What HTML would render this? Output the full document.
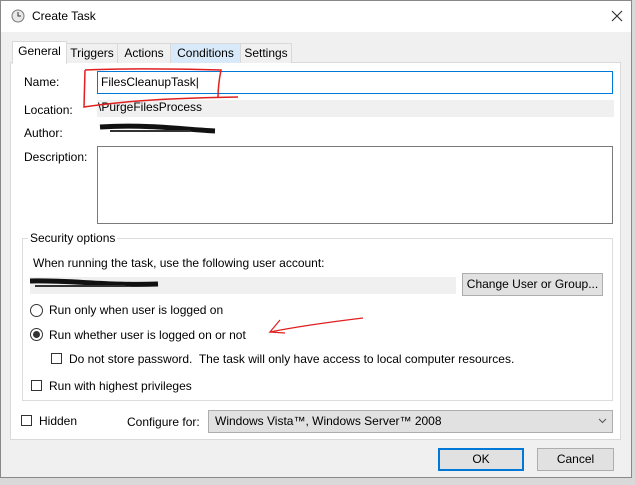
<!DOCTYPE html><html><head><style>
body{margin:0;width:635px;height:485px;background:#d9d9d9;position:relative;overflow:hidden;font-family:"Liberation Sans",sans-serif;font-size:12px;color:#000}
.a{position:absolute}
.win{left:0;top:0;width:632px;height:478px;background:#f0f0f0;border:1px solid #888;box-sizing:border-box}
.cb{width:11px;height:11px;border:1px solid #333;background:#fff;box-sizing:border-box}
.rb{width:13px;height:13px;border:1px solid #333;border-radius:50%;background:#fff;box-sizing:border-box}
.tab{top:43px;height:20px;border:1px solid #d9d9d9;border-bottom:none;background:#f0f0f0;box-sizing:border-box;line-height:19px;text-align:center}
.btn{background:#e1e1e1;border:1px solid #adadad;box-sizing:border-box;text-align:center}
</style></head><body>
<div class="a win"></div>
<div class="a" style="left:1px;top:1px;width:630px;height:31px;background:#fff"></div>
<svg class="a" style="left:11px;top:9px" width="14" height="14"><circle cx="7" cy="7" r="6" fill="#e8e8e8" stroke="#777"/><path d="M7 3V7H10" stroke="#333" fill="none"/></svg>
<div class="a" style="left:32px;top:9px;font-size:12px">Create Task</div>
<svg class="a" style="left:611px;top:10px" width="12" height="12"><path d="M1 1L11 11M11 1L1 11" stroke="#222" stroke-width="1"/></svg>
<div class="a" style="left:10px;top:62px;width:611px;height:378px;background:#fff;border:1px solid #d9d9d9;box-sizing:border-box"></div>
<div class="a tab" style="left:66px;width:52px">Triggers</div>
<div class="a tab" style="left:117px;width:54px">Actions</div>
<div class="a tab" style="left:170px;width:71px;background:#d8eaf9">Conditions</div>
<div class="a tab" style="left:240px;width:52px">Settings</div>
<div class="a tab" style="left:12px;top:41px;height:23px;width:55px;background:#fff;border-color:#d9d9d9">General</div>
<div class="a" style="left:24px;top:75px">Name:</div>
<div class="a" style="left:97px;top:71px;width:516px;height:23px;border:1px solid #0078d7;background:#fff;box-sizing:border-box;padding:3px 3px">FilesCleanupTask|</div>
<div class="a" style="left:24px;top:103px">Location:</div>
<div class="a" style="left:97px;top:100px;width:516px;height:17px;background:#f0f0f0;padding-left:1px">\PurgeFilesProcess</div>
<div class="a" style="left:24px;top:126px">Author:</div>
<div class="a" style="left:24px;top:150px">Description:</div>
<div class="a" style="left:97px;top:146px;width:516px;height:78px;border:1px solid #7a7a7a;background:#fff;box-sizing:border-box"></div>
<div class="a" style="left:22px;top:238px;width:591px;height:163px;border:1px solid #dcdcdc;box-sizing:border-box"></div>
<div class="a" style="left:28px;top:231px;background:#fff;padding:0 2px">Security options</div>
<div class="a" style="left:33px;top:256px">When running the task, use the following user account:</div>
<div class="a" style="left:30px;top:277px;width:426px;height:17px;background:#f0f0f0"></div>
<div class="a btn" style="left:462px;top:273px;width:141px;height:23px;line-height:21px">Change User or Group...</div>
<div class="a rb" style="left:30px;top:304px"></div><div class="a" style="left:49px;top:303px">Run only when user is logged on</div>
<div class="a rb" style="left:30px;top:328px"><div class="a" style="left:2px;top:2px;width:7px;height:7px;border-radius:50%;background:#333"></div></div><div class="a" style="left:49px;top:328px">Run whether user is logged on or not</div>
<div class="a cb" style="left:51px;top:353px"></div><div class="a" style="left:69px;top:352px">Do not store password.&nbsp; The task will only have access to local computer resources.</div>
<div class="a cb" style="left:31px;top:380px"></div><div class="a" style="left:49px;top:379px">Run with highest privileges</div>
<div class="a cb" style="left:21px;top:415px"></div><div class="a" style="left:39px;top:414px">Hidden</div>
<div class="a" style="left:127px;top:415px">Configure for:</div>
<div class="a" style="left:208px;top:410px;width:405px;height:23px;background:#e1e1e1;border:1px solid #adadad;box-sizing:border-box;padding:3px 6px">Windows Vista™, Windows Server™ 2008</div>
<svg class="a" style="left:598px;top:418px" width="9" height="6"><path d="M1 1L4.5 4.5L8 1" stroke="#555" fill="none"/></svg>
<div class="a btn" style="left:438px;top:448px;width:86px;height:23px;line-height:19px;border:2px solid #0078d7">OK</div>
<div class="a btn" style="left:537px;top:448px;width:77px;height:23px;line-height:21px">Cancel</div>
<svg class="a" style="left:0;top:0" width="635" height="485">
<path d="M100 127C150 124 190 130 215 131" stroke="#111" stroke-width="5" fill="none"/>
<path d="M110 131L190 131" stroke="#333" stroke-width="2"/>
<path d="M30 281C70 280 110 286 158 284" stroke="#111" stroke-width="5" fill="none"/>
<path d="M35 286L125 286" stroke="#333" stroke-width="2"/>
<path d="M85 70C130 68 180 69 221 70C219 80 218 90 218 98M85 70L84 107C130 100 180 98 238 97" stroke="#e02020" stroke-width="1.5" fill="none"/>
<path d="M363 318C330 322 300 326 270 332L280 320M270 332L285 333" stroke="#e02020" stroke-width="1.2" fill="none"/>
</svg>
</body></html>
